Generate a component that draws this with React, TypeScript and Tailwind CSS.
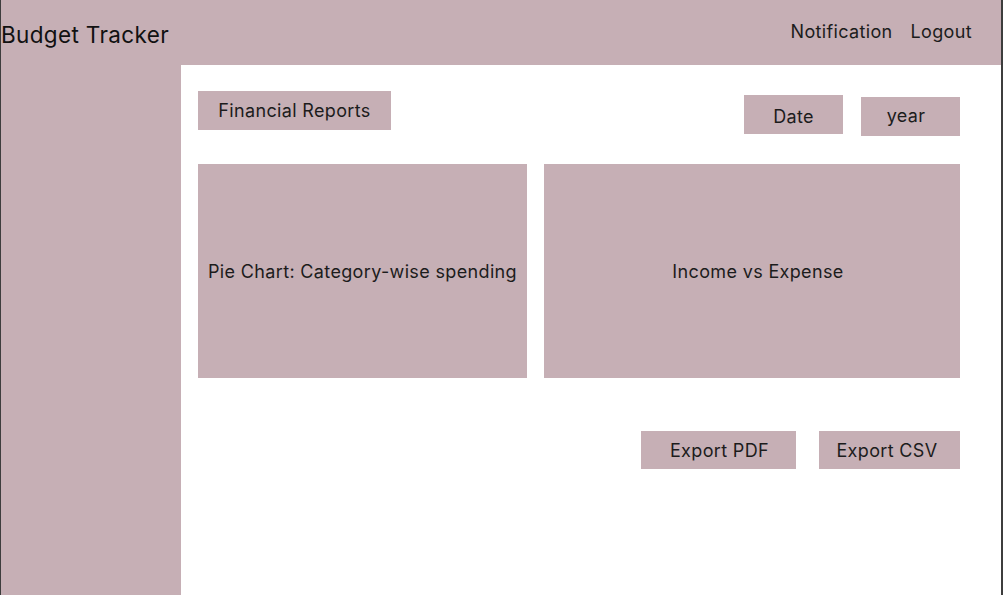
import React from 'react';

const box = 'bg-[#c6afb5] flex items-center justify-center text-[#1c1c1c] tracking-[0.35px]';

export default function App() {
  return (
    <div
      className="w-[1003px] h-[595px] flex flex-col border-l border-r-2 border-[#3d3d3d] bg-white overflow-hidden"
      style={{ fontFamily: 'Inter, "Noto Sans", sans-serif' }}
    >
      <header className="h-[65px] shrink-0 bg-[#c6afb5] flex items-center justify-between pr-[29px]">
        <h1 className="text-[22.5px] tracking-[0.35px] text-[#111] pt-[5px]">Budget Tracker</h1>
        <nav className="flex gap-[18px] text-[18px] tracking-[0.35px] text-[#1c1c1c] pb-[2px]">
          <span>Notification</span>
          <span>Logout</span>
        </nav>
      </header>

      <div className="flex flex-1">
        <aside className="w-[180px] shrink-0 bg-[#c6afb5]" />

        <main className="flex-1 pl-[17px] pr-[41px] pt-[26px] text-[18px]">
          <div className="h-[73px] flex justify-between items-start">
            <div className={`${box} w-[193px] h-[39px]`}>Financial Reports</div>
            <div className="flex gap-[18px]">
              <div className={`${box} w-[99px] h-[39px] mt-[4px] pt-[4px]`}>Date</div>
              <div className={`${box} w-[99px] h-[39px] mt-[6px] pr-[9px] pb-[2px]`}>year</div>
            </div>
          </div>

          <div className="flex gap-[17px] h-[214px]">
            <div className={`${box} w-[329px]`}>Pie Chart: Category-wise spending</div>
            <div className={`${box} flex-1 pl-[12px]`}>Income vs Expense</div>
          </div>

          <div className="flex justify-end gap-[23px] mt-[53px]">
            <button className={`${box} w-[155px] h-[38px] pl-[2px]`}>Export PDF</button>
            <button className={`${box} w-[141px] h-[38px] pr-[5px]`}>Export CSV</button>
          </div>
        </main>
      </div>
    </div>
  );
}
